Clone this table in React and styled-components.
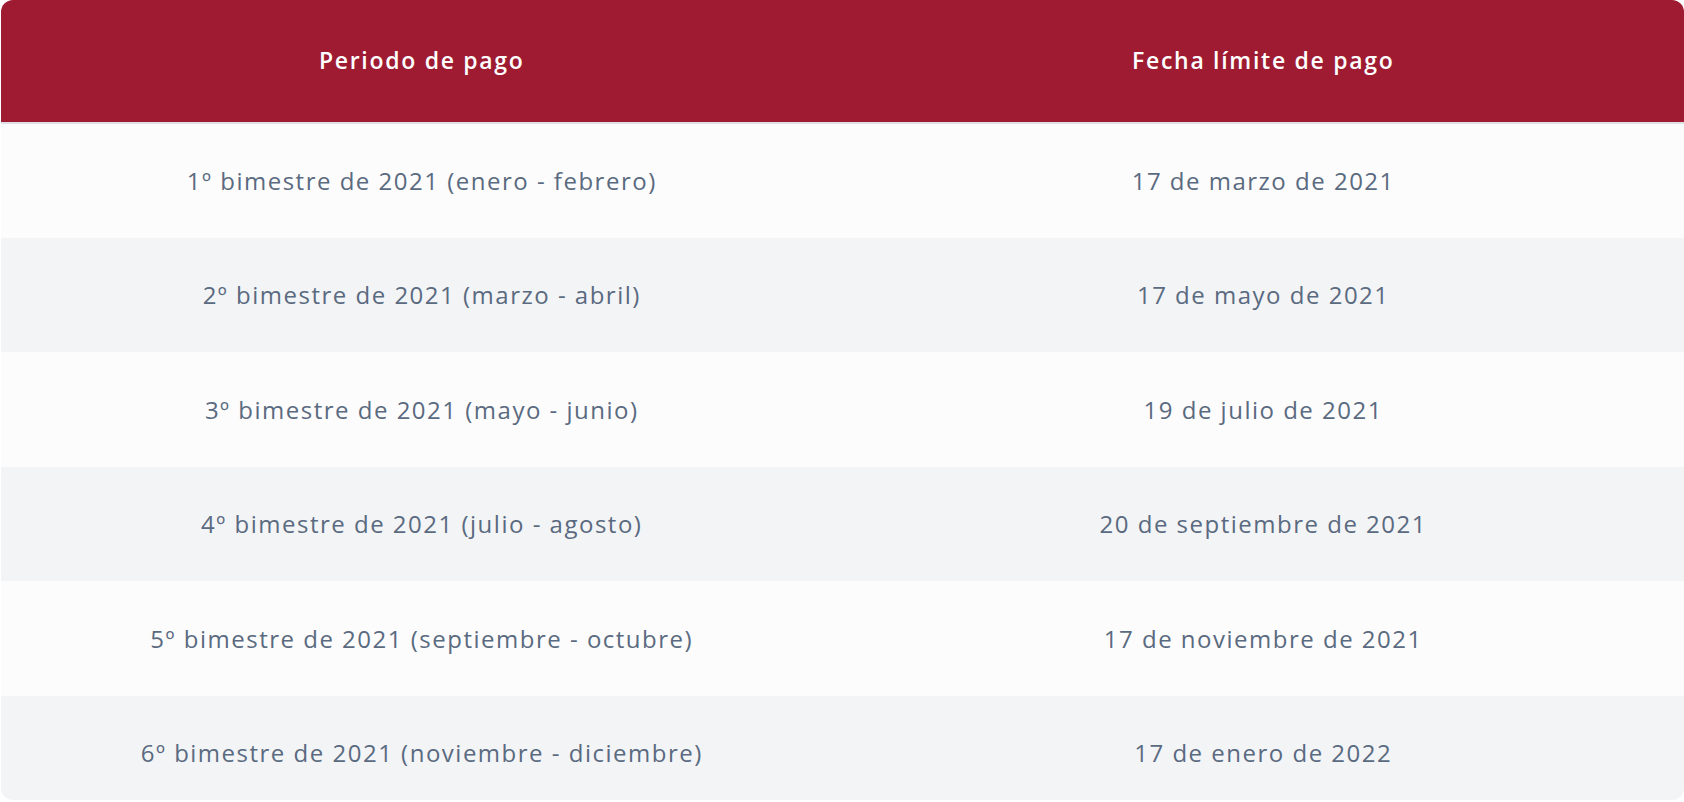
import React from "react";
import styled, { createGlobalStyle } from "styled-components";

const Global = createGlobalStyle`
  html, body { margin: 0; padding: 0; background: #ffffff; }
  body { font-family: "Open Sans", "Noto Sans", sans-serif; }
`;

const Frame = styled.div`
  width: 1683px;
  height: 800px;
  margin-left: 1px;
  border-radius: 12px;
  overflow: hidden;
  background: #fcfcfc;
`;

const Table = styled.table`
  width: 100%;
  border-collapse: collapse;
  table-layout: fixed;
`;

const HeadRow = styled.tr`
  height: 123px;
  background: #9e1b32;
  border-bottom: 2px solid #dfe0e6;
`;

const HeadCell = styled.th`
  width: 50%;
  color: #ffffff;
  font-family: "Open Sans", "Noto Sans", sans-serif;
  font-weight: 600;
  font-size: 23px;
  letter-spacing: 1.7px;
  text-align: center;
  vertical-align: middle;
  padding: 0 0 2px;
`;

const Row = styled.tr`
  height: 114.5px;
  background: ${(p) => (p.$alt ? "#f3f4f6" : "#fcfcfc")};
`;

const Cell = styled.td`
  color: #5a6a80;
  font-family: "Open Sans", "Noto Sans", sans-serif;
  font-weight: 400;
  font-size: 24px;
  letter-spacing: 1.5px;
  text-align: center;
  vertical-align: middle;
  padding: 0;
`;

const rows = [
  ["1º bimestre de 2021 (enero - febrero)", "17 de marzo de 2021"],
  ["2º bimestre de 2021 (marzo - abril)", "17 de mayo de 2021"],
  ["3º bimestre de 2021 (mayo - junio)", "19 de julio de 2021"],
  ["4º bimestre de 2021 (julio - agosto)", "20 de septiembre de 2021"],
  ["5º bimestre de 2021 (septiembre - octubre)", "17 de noviembre de 2021"],
  ["6º bimestre de 2021 (noviembre - diciembre)", "17 de enero de 2022"],
];

export default function App() {
  return (
    <>
      <Global />
      <Frame>
        <Table>
          <thead>
            <HeadRow>
              <HeadCell>Periodo de pago</HeadCell>
              <HeadCell>Fecha límite de pago</HeadCell>
            </HeadRow>
          </thead>
          <tbody>
            {rows.map(([a, b], i) => (
              <Row key={i} $alt={i % 2 === 1}>
                <Cell>{a}</Cell>
                <Cell>{b}</Cell>
              </Row>
            ))}
          </tbody>
        </Table>
      </Frame>
    </>
  );
}
